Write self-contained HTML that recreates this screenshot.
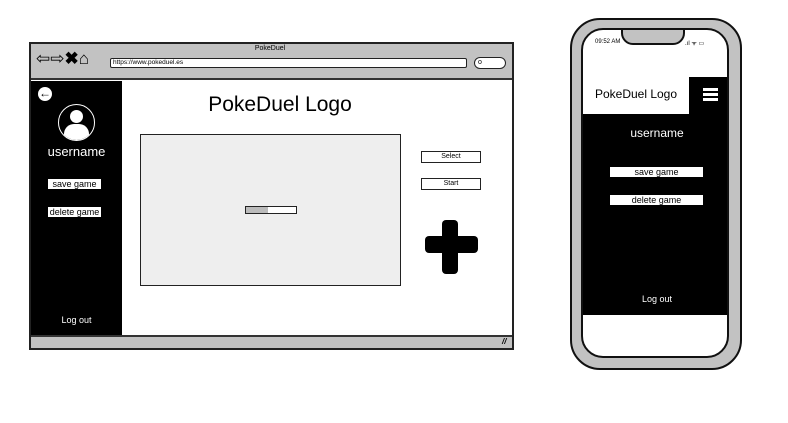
<!DOCTYPE html>
<html><head><style>
body{margin:0;width:788px;height:423px;background:#fff;position:relative;overflow:hidden;font-family:"Liberation Sans",sans-serif}
.a{position:absolute;box-sizing:border-box}
.btn{background:#fff;color:#000;font-size:9px;text-align:center;line-height:10px}
</style></head><body>
<!-- browser -->
<div class="a" style="left:29px;top:42px;width:485px;height:308px;border:2px solid #222;background:#fff"></div>
<div class="a" style="left:31px;top:44px;width:481px;height:36px;background:#c2c2c2;border-bottom:2px solid #333"></div>
<div class="a" style="left:240px;top:45px;width:60px;font-size:7px;text-align:center">PokeDuel</div>
<div class="a" style="left:36px;top:50px;font-size:17px;line-height:18px;letter-spacing:0px">⇦⇨<b>✖</b>⌂</div>
<div class="a" style="left:110px;top:58px;width:357px;height:10px;background:#fff;border:1.5px solid #222;border-radius:2px;font-size:6.5px;line-height:8px;padding-left:2px">https://www.pokeduel.es</div>
<div class="a" style="left:474px;top:57px;width:32px;height:12px;background:#fff;border:1.5px solid #222;border-radius:7px;font-size:7px;line-height:9px;padding-left:3px">o</div>
<div class="a" style="left:31px;top:81px;width:91px;height:254px;background:#000"></div>
<div class="a" style="left:38px;top:87px;width:14px;height:14px;border-radius:50%;background:#fff;color:#000;font-size:12px;line-height:13px;text-align:center;font-weight:bold">←</div>
<div class="a" style="left:58px;top:104px;width:37px;height:37px;border-radius:50%;border:1.5px solid #fff;overflow:hidden">
 <div class="a" style="left:11px;top:5px;width:13px;height:13px;border-radius:50%;background:#fff"></div>
 <div class="a" style="left:5px;top:19px;width:25px;height:20px;border-radius:10px 10px 0 0;background:#fff"></div>
</div>
<div class="a" style="left:31px;top:144px;width:91px;text-align:center;color:#fff;font-size:13px">username</div>
<div class="a btn" style="left:48px;top:179px;width:53px;height:10px">save game</div>
<div class="a btn" style="left:48px;top:207px;width:53px;height:10px">delete game</div>
<div class="a" style="left:31px;top:315px;width:91px;text-align:center;color:#fff;font-size:9px">Log out</div>
<div class="a" style="left:122px;top:93px;width:316px;text-align:center;font-size:21px">PokeDuel Logo</div>
<div class="a" style="left:140px;top:134px;width:261px;height:152px;background:#eee;border:1.5px solid #222"></div>
<div class="a" style="left:245px;top:206px;width:52px;height:8px;background:#fff;border:1.5px solid #222"><div style="width:22px;height:100%;background:#bbb"></div></div>
<div class="a btn" style="left:421px;top:151px;width:60px;height:12px;border:1.5px solid #222;font-size:7px">Select</div>
<div class="a btn" style="left:421px;top:178px;width:60px;height:12px;border:1.5px solid #222;font-size:7px">Start</div>
<div class="a" style="left:442px;top:220px;width:16px;height:54px;background:#000;border-radius:4px"></div>
<div class="a" style="left:425px;top:236px;width:53px;height:17px;background:#000;border-radius:4px"></div>
<div class="a" style="left:31px;top:335px;width:481px;height:13px;background:#c2c2c2;border-top:2px solid #333"></div>
<div class="a" style="left:502px;top:337px;font-size:8px;font-style:italic;font-weight:bold">//</div>
<!-- phone -->
<div class="a" style="left:570px;top:18px;width:172px;height:352px;border:2.5px solid #111;border-radius:30px;background:#c2c2c2"></div>
<div class="a" style="left:581px;top:28px;width:148px;height:330px;border:2px solid #111;border-radius:22px;background:#fff;overflow:hidden">
 <div class="a" style="left:38px;top:-4px;width:64px;height:19px;background:#c2c2c2;border:2px solid #111;border-radius:0 0 12px 12px"></div>
 <div class="a" style="left:12px;top:9px;font-size:6px">09:52 AM</div>
 <div class="a" style="left:102px;top:9px;font-size:6px">.ıl ᯤ ▭</div>
 <div class="a" style="left:106px;top:47px;width:42px;height:38px;background:#000"></div>
 <div class="a" style="left:120px;top:58px;width:15px;height:3px;background:#fff;box-shadow:0 5px 0 #fff,0 10px 0 #fff"></div>
 <div class="a" style="left:0;top:57px;width:106px;text-align:center;font-size:12px">PokeDuel Logo</div>
 <div class="a" style="left:0;top:84px;width:148px;height:201px;background:#000"></div>
 <div class="a" style="left:0;top:96px;width:148px;text-align:center;color:#fff;font-size:12px">username</div>
 <div class="a btn" style="left:27px;top:137px;width:93px;height:10px">save game</div>
 <div class="a btn" style="left:27px;top:165px;width:93px;height:10px">delete game</div>
 <div class="a" style="left:0;top:264px;width:148px;text-align:center;color:#fff;font-size:9px">Log out</div>
</div>
</body></html>
